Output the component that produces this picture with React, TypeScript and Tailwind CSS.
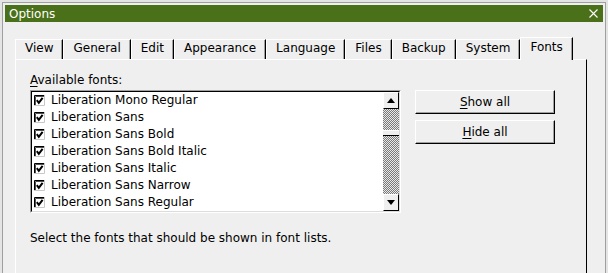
import React from 'react';

const tabs = ['View', 'General', 'Edit', 'Appearance', 'Language', 'Files', 'Backup', 'System', 'Fonts'];
const fonts = [
  'Liberation Mono Regular',
  'Liberation Sans',
  'Liberation Sans Bold',
  'Liberation Sans Bold Italic',
  'Liberation Sans Italic',
  'Liberation Sans Narrow',
  'Liberation Sans Regular',
];

function Check() {
  return (
    <svg width="11" height="11" viewBox="0 0 11 11" className="shrink-0">
      <rect x="0" y="0" width="11" height="11" fill="#fff" />
      <path d="M0.5 11V0.5H11" stroke="#000" fill="none" />
      <path d="M1.5 10V1.5H10" stroke="#505050" fill="none" />
      <path d="M10.5 0V10.5H0" stroke="#c8c8c8" fill="none" />
      <path d="M2.8 5.2l2 2.6 3.8-5" stroke="#000" strokeWidth="2" fill="none" />
    </svg>
  );
}

function Arrow({ up }: { up?: boolean }) {
  return (
    <div className="h-[17px] border-t border-l border-white border-r border-b border-r-black border-b-black bg-[#efefef] flex items-center justify-center">
      <svg width="8" height="5" viewBox="0 0 8 5">
        <path d={up ? 'M0 5h8L4 0z' : 'M0 0h8L4 5z'} fill="#000" />
      </svg>
    </div>
  );
}

function Btn({ k, rest }: { k: string; rest: string }) {
  return (
    <div className="h-[24px] border-t border-l border-white border-r border-b border-r-black border-b-black bg-[#efefef] shadow-[inset_-1px_-1px_0_#a0a0a0] flex items-center justify-center">
      <span><span className="underline underline-offset-[2px]">{k}</span>{rest}</span>
    </div>
  );
}

export default function App() {
  return (
    <div className="w-[608px] h-[273px] overflow-hidden bg-[#e4e4e4] px-[2px] pt-[2px] font-['DejaVu_Sans',sans-serif] text-[12px] leading-[14px] text-black">
      <div className="h-full border border-b-0 border-[#a0a0a0] bg-[#efefef] px-[2px] pt-[2px] flex flex-col">
        {/* Title bar */}
        <div className="h-[17px] bg-[#4b701a] flex items-center justify-between pl-[4px] pr-[5px] text-white">
          <span>Options</span>
          <svg width="9" height="9" viewBox="0 0 9 9">
            <path d="M0.5 0.5l8 8M8.5 0.5l-8 8" stroke="#fff" strokeWidth="1.1" />
          </svg>
        </div>

        <div className="flex-1 flex flex-col pl-[10px] pr-[16px] pt-[15px]">
          {/* Tabs */}
          <div className="flex items-end h-[22px]">
            {tabs.map(t =>
              t === 'Fonts' ? (
                <div key={t} className="relative z-10 -mb-px h-[23px] px-[9px] pt-[2px] border-l border-t border-white border-r border-r-black shadow-[inset_-1px_0_0_#a0a0a0] bg-[#efefef]">
                  {t}
                </div>
              ) : (
                <div key={t} className="h-[20px] px-[9px] pt-[1px] border-l border-t border-white border-r border-r-black shadow-[inset_-1px_0_0_#a0a0a0]">
                  {t}
                </div>
              )
            )}
          </div>

          {/* Panel */}
          <div className="flex-1 border-l border-t border-white border-r border-r-black pl-[14px] pt-[13px]">
            <div><span className="underline underline-offset-[2px]">A</span>vailable fonts:</div>
            <div className="mt-[3px] flex gap-[14px]">
              <div className="w-[371px] h-[123px] border-t border-l border-[#a0a0a0] border-b border-r border-b-white border-r-white">
                <div className="h-full border-t border-l border-black border-b border-r border-b-[#dcdcdc] border-r-[#dcdcdc] bg-white flex">
                  <div className="flex-1 flex flex-col">
                    {fonts.map(f => (
                      <div key={f} className="h-[17px] flex items-center pl-[2px] gap-[6px]">
                        <Check />
                        <span className="-mt-px">{f}</span>
                      </div>
                    ))}
                  </div>
                  <div className="w-[16px] flex flex-col">
                    <Arrow up />
                    <div className="flex-1 flex flex-col bg-[repeating-conic-gradient(#7a7a7a_0_25%,#e8e8e8_0_50%)] bg-[length:2px_2px]">
                      <div className="h-[21px]" />
                      <div className="h-[6px] bg-[#efefef] border-t border-white border-b border-b-black" />
                    </div>
                    <Arrow />
                  </div>
                </div>
              </div>
              <div className="w-[140px] flex flex-col gap-[6px]">
                <Btn k="S" rest="how all" />
                <Btn k="H" rest="ide all" />
              </div>
            </div>
            <div className="mt-[18px]">Select the fonts that should be shown in font lists.</div>
          </div>
        </div>
      </div>
    </div>
  );
}
